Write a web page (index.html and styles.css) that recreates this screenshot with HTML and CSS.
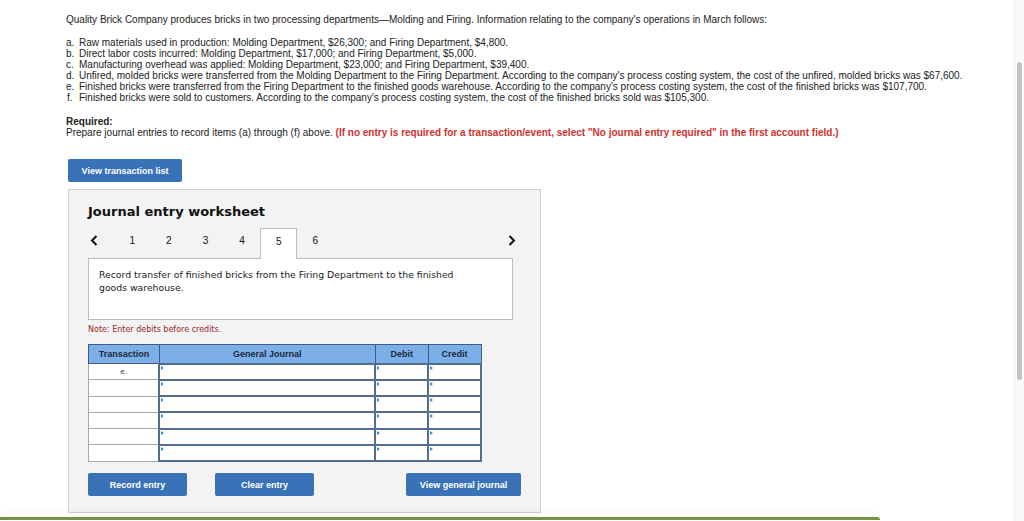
FILE: index.html
```html
<!DOCTYPE html>
<html lang="en">
  <head>
    <meta charset="UTF-8" />
    <meta name="viewport" content="width=device-width, initial-scale=1.0" />
    <title>Journal Entry Worksheet</title>
    <link rel="stylesheet" href="styles.css">
  </head>
  <body>
    <main class="page">
      <!-- Question text -->
      <p class="intro">
        Quality Brick Company produces bricks in two processing departments&mdash;Molding and Firing. Information relating to the company's operations in March follows:
      </p>
      <ul class="items">
        <li><span class="lbl">a.</span>Raw materials used in production: Molding Department, $26,300; and Firing Department, $4,800.</li>
        <li><span class="lbl">b.</span>Direct labor costs incurred: Molding Department, $17,000; and Firing Department, $5,000.</li>
        <li><span class="lbl">c.</span>Manufacturing overhead was applied: Molding Department, $23,000; and Firing Department, $39,400.</li>
        <li><span class="lbl">d.</span>Unfired, molded bricks were transferred from the Molding Department to the Firing Department. According to the company's process costing system, the cost of the unfired, molded bricks was $67,600.</li>
        <li><span class="lbl">e.</span>Finished bricks were transferred from the Firing Department to the finished goods warehouse. According to the company's process costing system, the cost of the finished bricks was $107,700.</li>
        <li><span class="lbl lbl-f">f.</span>Finished bricks were sold to customers. According to the company's process costing system, the cost of the finished bricks sold was $105,300.</li>
      </ul>

      <div class="required">
        <strong>Required:</strong><br />
        Prepare journal entries to record items (a) through (f) above.
        <span class="warn">(If no entry is required for a transaction/event, select "No journal entry required" in the first account field.)</span>
      </div>

      <button class="btn btn-list">View transaction list</button>

      <!-- Worksheet panel -->
      <section class="worksheet">
        <h2>Journal entry worksheet</h2>

        <div class="tabs">
          <span class="arrow">
            <svg width="8" height="11" viewBox="0 0 8 11"><path d="M6.5 1 L2 5.5 L6.5 10" fill="none" stroke="#111" stroke-width="2"/></svg>
          </span>
          <div class="tab-list">
            <span class="tab">1</span>
            <span class="tab">2</span>
            <span class="tab">3</span>
            <span class="tab">4</span>
            <span class="tab active">5</span>
            <span class="tab">6</span>
          </div>
          <span class="arrow arrow-right">
            <svg width="8" height="11" viewBox="0 0 8 11"><path d="M1.5 1 L6 5.5 L1.5 10" fill="none" stroke="#111" stroke-width="2"/></svg>
          </span>
        </div>

        <div class="desc">
          Record transfer of finished bricks from the Firing Department to the finished<br />goods warehouse.
        </div>

        <p class="note">Note: Enter debits before credits.</p>

        <table class="journal">
          <thead>
            <tr>
              <th class="c-tr">Transaction</th>
              <th class="c-gj">General Journal</th>
              <th class="c-dr">Debit</th>
              <th class="c-cr">Credit</th>
            </tr>
          </thead>
          <tbody id="journal-body"></tbody>
        </table>

        <div class="actions">
          <button class="btn btn-record">Record entry</button>
          <button class="btn btn-clear">Clear entry</button>
          <button class="btn btn-view">View general journal</button>
        </div>
      </section>
    </main>

    <div class="footer-bar"></div>

    <div class="scrollbar"><div class="thumb"></div></div>

    <script>
      // six empty journal lines, first one tagged with the transaction letter
      const body = document.getElementById('journal-body');
      for (let i = 0; i < 6; i++) {
        const tr = document.createElement('tr');
        tr.innerHTML =
          '<td class="tr-cell">' + (i === 0 ? 'e.' : '') + '</td>' +
          '<td class="in-cell"><span class="mark"></span></td>' +
          '<td class="in-cell"><span class="mark"></span></td>' +
          '<td class="in-cell"><span class="mark"></span></td>';
        body.appendChild(tr);
      }
    </script>
  </body>
</html>
```

FILE: styles.css
```css
html {
  overflow: hidden;
}
body {
  margin: 0;
  padding: 0;
  background: #fff;
  font-family: "Liberation Sans", Arial, sans-serif;
  font-size: 10px;
  color: #222;
}
.page {
  padding: 14px 0 0 66px;
}
.intro {
  margin: 0;
  line-height: 11px;
}
.items {
  list-style: none;
  margin: 12px 0 0;
  padding: 0;
  line-height: 11px;
}
.items li {
  display: flex;
}
.lbl {
  flex: 0 0 13px;
}
.lbl-f {
  padding-left: 1px;
  flex-basis: 12px;
}
.required {
  margin-top: 13px;
  line-height: 11px;
}
.required strong {
  color: #222;
}
.warn {
  color: #d0312d;
  font-weight: bold;
}
.btn {
  display: block;
  height: 23px;
  border: none;
  border-radius: 2px;
  background: #3a72b8;
  color: #fff;
  font-family: "Liberation Sans", Arial, sans-serif;
  font-size: 9px;
  font-weight: bold;
  padding: 0;
  cursor: pointer;
}
.btn-list {
  margin: 21px 0 0 2px;
  width: 114px;
}
/* Worksheet panel */
.worksheet {
  margin: 7px 0 0 2px;
  width: 433px;
  height: 322px;
  padding: 0 19px 0 19px;
  background: #f3f3f3;
  border: 1px solid #cfcfcf;
  font-family: "DejaVu Sans", Verdana, sans-serif;
}
.worksheet h2 {
  margin: 0;
  padding-top: 14px;
  font-size: 13px;
  line-height: 15px;
  font-weight: bold;
  color: #111;
}
.tabs {
  display: flex;
  margin-top: 9px;
  width: 432px;
  height: 30px;
}
.arrow {
  width: 26px;
  height: 30px;
  display: flex;
  align-items: center;
  padding: 0 0 6px 2px;
  box-sizing: border-box;
}
.arrow-right {
  margin-left: auto;
  width: 12px;
  padding-left: 0;
}
.tab-list {
  display: flex;
}
.tab {
  width: 36.6px;
  height: 30px;
  box-sizing: border-box;
  display: flex;
  align-items: center;
  justify-content: center;
  padding-bottom: 6px;
  font-family: "Liberation Sans", Arial, sans-serif;
  font-size: 10px;
  color: #111;
  position: relative;
}
.tab.active {
  background: #fff;
  border: 1px solid #bcbcbc;
  border-bottom: none;
  height: 31px;
  margin-bottom: -1px;
  z-index: 1;
}
.desc {
  width: 425px;
  height: 62px;
  box-sizing: border-box;
  background: #fff;
  border: 1px solid #bcbcbc;
  padding: 9px 10px 0;
  font-size: 9.3px;
  line-height: 13px;
  color: #222;
}
.note {
  margin: 5px 0 0;
  font-size: 8px;
  line-height: 10px;
  color: #a1242a;
}
/* Journal table */
.journal {
  margin-top: 9px;
  border-collapse: collapse;
  width: 394px;
  font-family: "Liberation Sans", Arial, sans-serif;
  font-size: 9px;
}
.journal thead tr {
  height: 19px;
}
.journal tbody tr {
  height: 16.3px;
}
.journal th {
  background: #7cafe7;
  border: 1px solid #3f5b82;
  font-weight: bold;
  color: #1c2a3c;
  padding: 0;
}
.c-tr { width: 70px; }
.c-gj { width: 216px; }
.c-dr { width: 52px; }
.c-cr { width: 52px; }
.tr-cell {
  background: #fff;
  border: 1px solid #a9a9a9;
  text-align: center;
  color: #444;
  font-size: 8px;
  padding: 0;
}
.in-cell {
  background: #fff;
  border: 2px solid #566c8d;
  padding: 0;
  position: relative;
}
.mark {
  position: absolute;
  top: 1px;
  left: 1px;
  width: 0;
  height: 0;
  border-top: 2.5px solid transparent;
  border-bottom: 2.5px solid transparent;
  border-left: 3.5px solid #3d86d6;
}
.actions {
  display: flex;
  margin-top: 11px;
}
.btn-record {
  width: 99px;
}
.btn-clear {
  width: 99px;
  margin-left: 28px;
}
.btn-view {
  width: 115px;
  margin-left: 92px;
}
/* Bits at the window edges */
.footer-bar {
  margin-top: 4px;
  width: 880px;
  height: 3px;
  background: #739447;
  border-top-right-radius: 3px;
  box-shadow: 0 -5px 8px rgba(0, 0, 0, 0.06);
}
.scrollbar {
  position: fixed;
  top: 0;
  right: 0;
  width: 9px;
  height: 100%;
  background: #fafafa;
  border-left: 1px solid #ececec;
}
.thumb {
  margin: 62px 0 0 2px;
  width: 5px;
  height: 318px;
  border-radius: 3px;
  background: #c2c2c2;
}
```
